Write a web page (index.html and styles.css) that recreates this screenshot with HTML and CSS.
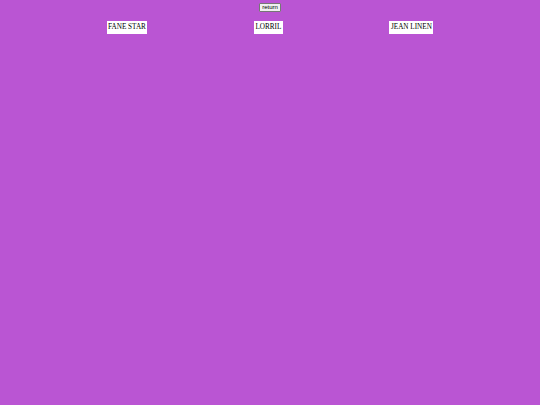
FILE: index.html
```html
<!DOCTYPE html>
<html>
<head>
<meta charset="utf-8">
<link rel="stylesheet" href="styles.css">
</head>
<body>
<div class="top"><button class="ret">return</button></div>
<div class="row">
  <div class="name">FANE STAR</div>
  <div class="name">LORRIL</div>
  <div class="name">JEAN LINEN</div>
</div>
</body>
</html>
```
FILE: styles.css
```css
html, body {
  margin: 0;
  padding: 0;
  background: #ba55d3;
  height: 100%;
}
.top {
  display: flex;
  justify-content: center;
  padding-top: 3px;
}
.ret {
  font-family: "Liberation Sans", Arial, sans-serif;
  font-size: 6px;
  height: 9px;
  padding: 0 2px;
  line-height: 7px;
  background: #f0f0f0;
  border: 1px solid #767676;
  border-radius: 1px;
  color: #000;
}
.row {
  display: flex;
  justify-content: space-evenly;
  margin-top: 9px;
}
.name {
  font-family: "Liberation Serif", "Times New Roman", serif;
  font-size: 7.2px;
  line-height: 11px;
  background: #fff;
  color: #000;
  padding: 1px 1.5px;
}
```
